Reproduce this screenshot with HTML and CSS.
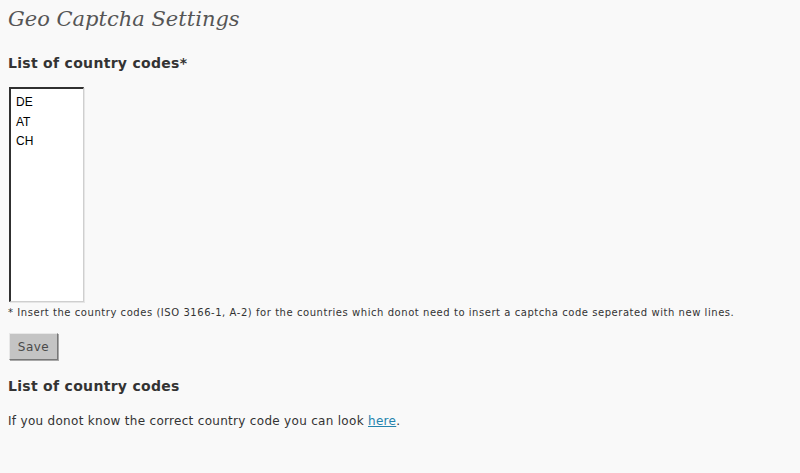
FILE: index.html
```html
<!DOCTYPE html>
<html lang="en">
<head>
    <meta charset="UTF-8">
    <title>Geo Captcha Settings</title>
    <link rel="stylesheet" href="styles.css">
</head>
<body>
    <div class="wrap">
        <h2>Geo Captcha Settings</h2>
        <form class="settings">
            <h3>List of country codes*</h3>
            <textarea class="codes" name="codes">DE
AT
CH</textarea>
            <p class="note">* Insert the country codes (ISO 3166-1, A-2) for the countries which donot need to insert a captcha code seperated with new lines.</p>
            <button type="button" class="save">Save</button>
        </form>
        <h3 class="list-title">List of country codes</h3>
        <p class="info">If you donot know the correct country code you can look <a href="#">here</a>.</p>
    </div>
</body>
</html>
```

FILE: styles.css
```css
body {
    margin: 0;
    padding: 0;
    background-color: #f9f9f9;
    color: #333;
    font-family: "DejaVu Sans", Verdana, sans-serif;
}

.wrap {
    padding: 0 8px;
}

h2 {
    font-family: "DejaVu Serif", Georgia, serif;
    font-style: italic;
    font-weight: normal;
    font-size: 21px;
    color: #555;
    margin: 0;
    padding: 5px 0 0;
    line-height: 28px;
}

h3 {
    font-size: 14px;
    font-weight: bold;
    letter-spacing: 0.3px;
    color: #333;
    margin: 20px 0 0;
    line-height: 20px;
}

.codes {
    display: block;
    box-sizing: border-box;
    width: 75px;
    height: 215px;
    margin: 14px 0 0 1px;
    padding: 4px 5px;
    border-style: solid;
    border-width: 2px 1px 1px 2px;
    border-color: #303030 #cfcfcf #cfcfcf #303030;
    box-shadow: 1px 1px 0 #e6e6e6;
    background: #fff;
    font-family: "Liberation Sans", Arial, sans-serif;
    font-size: 12px;
    line-height: 19.5px;
    color: #000;
    resize: none;
}

.note {
    font-size: 10px;
    letter-spacing: 0.55px;
    margin: 5px 0 0;
    line-height: 12px;
}

.save {
    display: block;
    margin: 14px 0 0 1px;
    width: 49px;
    height: 27px;
    background: #c4c4c4;
    border: 1px solid;
    border-color: #e8e8e8 #777 #777 #e8e8e8;
    box-shadow: 1px 1px 0 #a8a8a8;
    color: #4a4a4a;
    font-family: "DejaVu Sans", Verdana, sans-serif;
    font-size: 12px;
    letter-spacing: 0.5px;
    padding: 0;
}

.list-title {
    margin-top: 16px;
}

.info {
    font-size: 12px;
    letter-spacing: 0.3px;
    margin: 17px 0 0;
    line-height: 16px;
}

.info a {
    color: #2583ad;
}
```
